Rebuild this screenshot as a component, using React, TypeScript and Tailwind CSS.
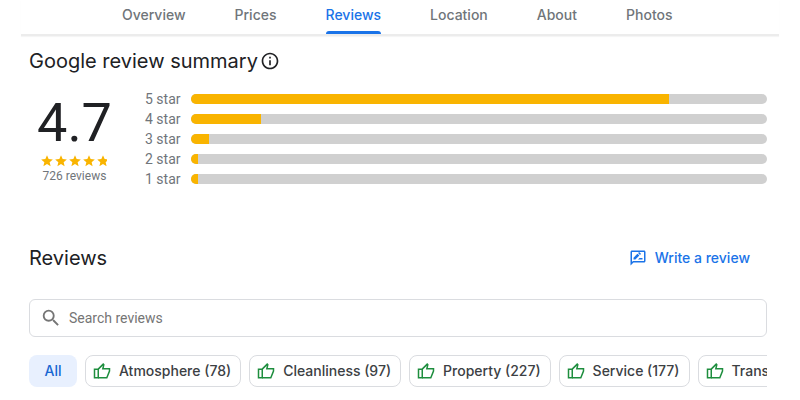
import React from 'react';
import { MdOutlineInfo, MdSearch } from 'react-icons/md';
import { clsx } from 'clsx';

const tabs = ['Overview', 'Prices', 'Reviews', 'Location', 'About', 'Photos'];

const ratings = [
  { label: '5 star', percent: 83 },
  { label: '4 star', percent: 12.2 },
  { label: '3 star', percent: 3.1 },
  { label: '2 star', percent: 1.2 },
  { label: '1 star', percent: 1.2 },
];

const topics = ['Atmosphere (78)', 'Cleanliness (97)', 'Property (227)', 'Service (177)', 'Transportation'];

const STAR = 'M12 17.27 18.18 21l-1.64-7.03L22 9.24l-7.19-.61L12 2 9.19 8.63 2 9.24l5.46 4.73L5.82 21z';

function Star({ partial }: { partial?: boolean }) {
  return (
    <svg viewBox="0 0 24 24" className="size-3.5" aria-hidden="true">
      <path d={STAR} fill="#f9b400" style={{ clipPath: partial ? 'inset(0 16% 0 0)' : undefined }} />
    </svg>
  );
}

function ThumbUp() {
  return (
    <svg viewBox="0 0 24 24" className="size-[18px] shrink-0 text-[#1e8e3e]" fill="none" stroke="currentColor" strokeWidth="2" aria-hidden="true">
      <path d="M2 9.5h5V21H2z" />
      <path d="M7 9.5 13.6 2.8l.8.8L13.1 9H22v3.2L18.4 21H7" />
    </svg>
  );
}

function RateReview() {
  return (
    <svg viewBox="0 0 24 24" className="size-[18px] shrink-0" fill="currentColor" aria-hidden="true">
      <path d="M20 2H4c-1.1 0-2 .9-2 2v18l4-4h14c1.1 0 2-.9 2-2V4c0-1.1-.9-2-2-2zm0 14H5.17L4 17.17V4h16v12z" />
      <path d="M12 14h6v-2h-4zM6 14h2.5l5.3-5.3-2.5-2.5L6 11.5zM14.6 7.9l1-1c.3-.3.3-.7 0-1l-1.5-1.5c-.3-.3-.7-.3-1 0l-1 1z" />
    </svg>
  );
}

export default function App() {
  const [activeTab, setActiveTab] = React.useState('Reviews');
  const [topic, setTopic] = React.useState('All');
  const [search, setSearch] = React.useState('');

  return (
    <div className="min-h-screen bg-white px-[21px] font-['Inter',sans-serif] text-[#202124]">
      {/* Tabs */}
      <nav className="flex gap-[49px] border-b-2 border-[#ececec] pl-[101px] shadow-[0_1px_1px_#f5f5f5]">
        {tabs.map((tab) => (
          <a
            key={tab}
            href={`#${tab.toLowerCase()}`}
            onClick={() => setActiveTab(tab)}
            className={clsx(
              'flex h-[34px] flex-col justify-between whitespace-nowrap pt-[5px] text-sm leading-5 font-medium',
              activeTab === tab ? 'text-[#1a73e8]' : 'text-[#70757a]'
            )}
          >
            {tab}
            {activeTab === tab && <span className="h-[3px] rounded-t-sm bg-[#1a73e8]" />}
          </a>
        ))}
      </nav>

      <main className="pr-3 pl-2">
        {/* Summary */}
        <section>
          <h2 className="flex items-center gap-0.5 pt-[11px] text-xl leading-7">
            Google review summary
            <MdOutlineInfo className="size-5" />
          </h2>

          <div className="flex pt-3.5 font-['Roboto',sans-serif] text-[#70757a]">
            <div className="flex w-[91px] flex-col items-center">
              <div className="pt-1 pb-px text-[54px] leading-[60px] text-[#202124]">4.7</div>
              <div className="flex" role="img" aria-label="4.7 out of 5">
                {[0, 1, 2, 3, 4].map((i) => <Star key={i} partial={i === 4} />)}
              </div>
              <div className="text-xs leading-4">726 reviews</div>
            </div>

            <div className="flex-1 pl-[25px]">
              {ratings.map((r) => (
                <div key={r.label} className="flex h-5 items-center">
                  <span className="w-[46px] text-sm leading-5">{r.label}</span>
                  <div className="h-2.5 flex-1 overflow-hidden rounded-full bg-[#d0d0d0]">
                    <div className="h-full bg-[#f9b400]" style={{ width: `${r.percent}%` }} />
                  </div>
                </div>
              ))}
            </div>
          </div>
        </section>

        {/* Reviews */}
        <section className="pt-[55px]">
          <div className="flex items-center justify-between pr-[17px]">
            <h2 className="text-xl leading-7">Reviews</h2>
            <button className="flex items-center gap-2 text-sm leading-5 font-medium text-[#1a73e8]">
              <RateReview />
              Write a review
            </button>
          </div>

          <label className="mt-[27px] flex h-[38px] items-center gap-[7px] rounded-md border border-[#dadce0] px-2.5">
            <MdSearch className="size-[22px] shrink-0 text-[#757575]" />
            <input
              type="text"
              aria-label="Search reviews"
              placeholder="Search reviews"
              value={search}
              onChange={(e) => setSearch(e.target.value)}
              className="min-w-0 flex-1 font-['Roboto',sans-serif] text-sm outline-none placeholder:text-[#757575]"
            />
          </label>

          <div className="mt-[18px] flex gap-2 overflow-x-auto text-sm font-medium [scrollbar-width:none]">
            <button
              onClick={() => setTopic('All')}
              className="h-8 w-12 shrink-0 rounded-lg bg-[#e8f0fe] text-[#1967d2]"
            >
              All
            </button>
            {topics.map((t) => (
              <button
                key={t}
                onClick={() => setTopic(t)}
                className={clsx(
                  'flex h-8 shrink-0 items-center gap-2 rounded-lg border pr-[9px] pl-[7px] whitespace-nowrap text-[#3c4043]',
                  topic === t ? 'border-[#1967d2]' : 'border-[#dadce0]'
                )}
              >
                <ThumbUp />
                {t}
              </button>
            ))}
          </div>
        </section>
      </main>
    </div>
  );
}
